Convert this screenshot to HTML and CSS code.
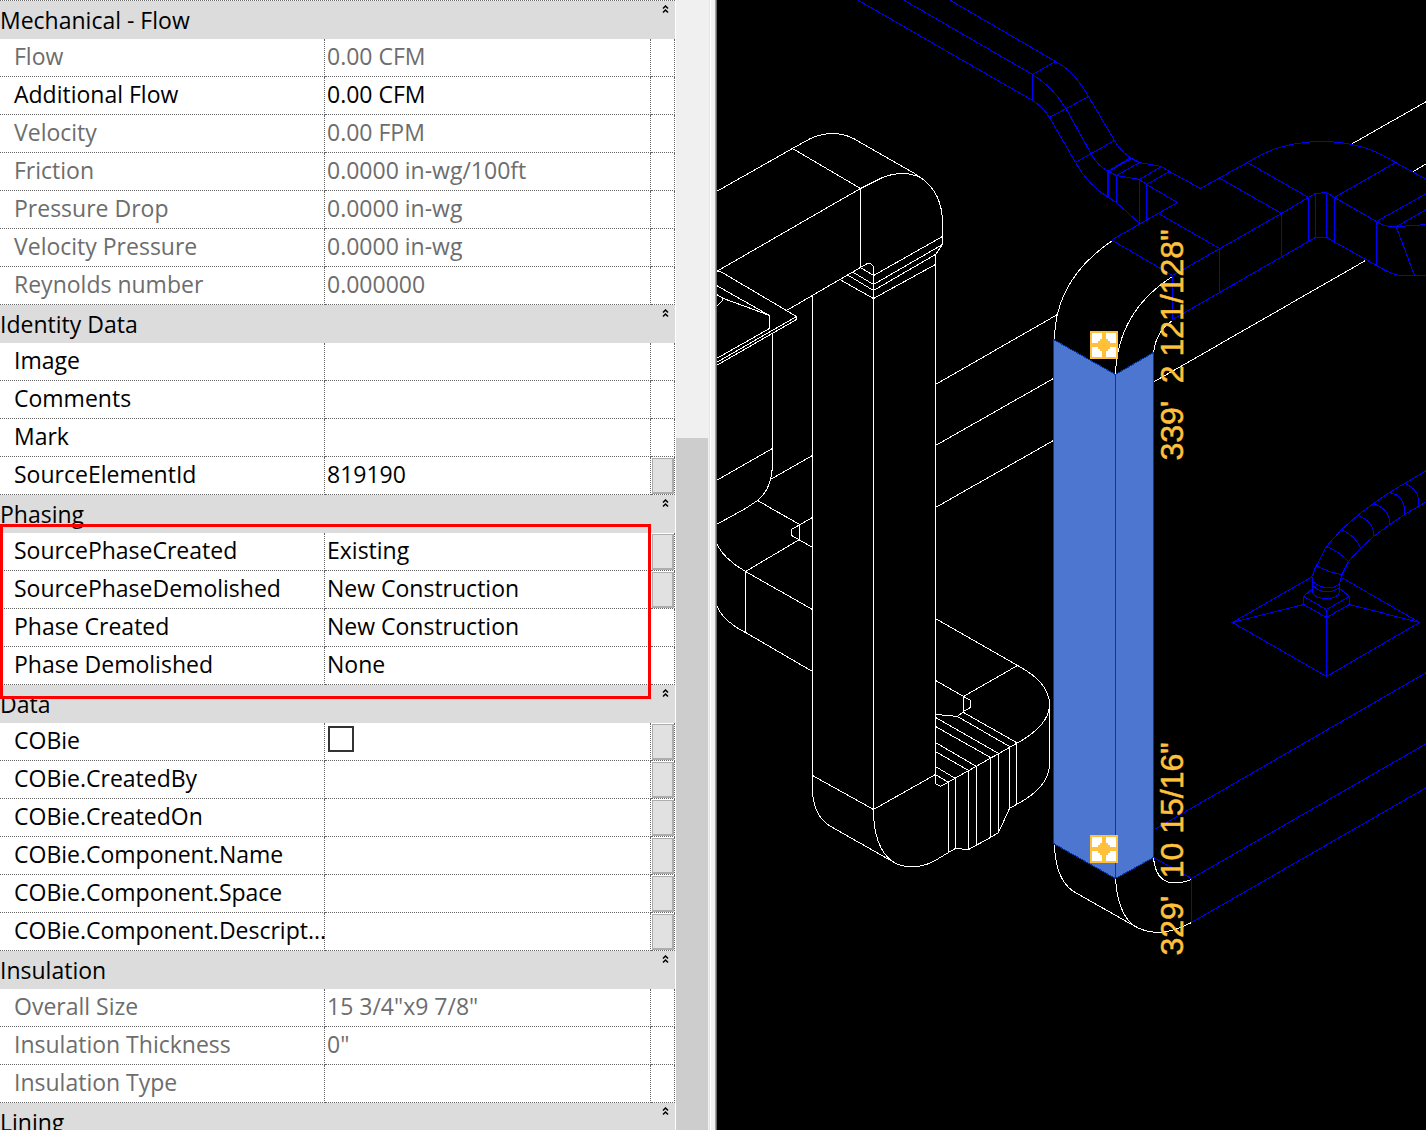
FILE: index.html
```html
<!DOCTYPE html>
<html lang="en">
<head>
<meta charset="utf-8">
<title>Properties</title>
<link rel="stylesheet" href="styles.css">
</head>
<body>
<main class="workspace">
<section class="properties" aria-label="Properties">
<table class="grid">
<colgroup><col class="col-name"><col class="col-value"><col class="col-action"></colgroup>
<tbody>
<tr class="group"><th colspan="2">Mechanical - Flow</th><td><button class="fold" aria-label="Collapse Mechanical - Flow"><svg viewBox="0 0 7 9"><path d="M1 3.500L3.500 1L6 3.500M1 7.500L3.500 5L6 7.500"/></svg></button></td></tr>
<tr class="readonly"><th>Flow</th><td>0.00 CFM</td><td></td></tr>
<tr><th>Additional Flow</th><td>0.00 CFM</td><td></td></tr>
<tr class="readonly"><th>Velocity</th><td>0.00 FPM</td><td></td></tr>
<tr class="readonly"><th>Friction</th><td>0.0000 in-wg/100ft</td><td></td></tr>
<tr class="readonly"><th>Pressure Drop</th><td>0.0000 in-wg</td><td></td></tr>
<tr class="readonly"><th>Velocity Pressure</th><td>0.0000 in-wg</td><td></td></tr>
<tr class="readonly"><th>Reynolds number</th><td>0.000000</td><td></td></tr>
</tbody>
<tbody>
<tr class="group"><th colspan="2">Identity Data</th><td><button class="fold" aria-label="Collapse Identity Data"><svg viewBox="0 0 7 9"><path d="M1 3.500L3.500 1L6 3.500M1 7.500L3.500 5L6 7.500"/></svg></button></td></tr>
<tr><th>Image</th><td></td><td></td></tr>
<tr><th>Comments</th><td></td><td></td></tr>
<tr><th>Mark</th><td></td><td></td></tr>
<tr><th>SourceElementId</th><td>819190</td><td><button class="assoc" aria-label="Associate SourceElementId"></button></td></tr>
</tbody>
<tbody>
<tr class="group"><th colspan="2">Phasing<div class="highlight"></div></th><td><button class="fold" aria-label="Collapse Phasing"><svg viewBox="0 0 7 9"><path d="M1 3.500L3.500 1L6 3.500M1 7.500L3.500 5L6 7.500"/></svg></button></td></tr>
<tr><th>SourcePhaseCreated</th><td>Existing</td><td><button class="assoc" aria-label="Associate SourcePhaseCreated"></button></td></tr>
<tr><th>SourcePhaseDemolished</th><td>New Construction</td><td><button class="assoc" aria-label="Associate SourcePhaseDemolished"></button></td></tr>
<tr><th>Phase Created</th><td>New Construction</td><td></td></tr>
<tr><th>Phase Demolished</th><td>None</td><td></td></tr>
</tbody>
<tbody>
<tr class="group"><th colspan="2">Data</th><td><button class="fold" aria-label="Collapse Data"><svg viewBox="0 0 7 9"><path d="M1 3.500L3.500 1L6 3.500M1 7.500L3.500 5L6 7.500"/></svg></button></td></tr>
<tr><th><label for="cobie">COBie</label></th><td class="check"><input type="checkbox" id="cobie" class="tick"></td><td><button class="assoc" aria-label="Associate COBie"></button></td></tr>
<tr><th>COBie.CreatedBy</th><td></td><td><button class="assoc" aria-label="Associate COBie.CreatedBy"></button></td></tr>
<tr><th>COBie.CreatedOn</th><td></td><td><button class="assoc" aria-label="Associate COBie.CreatedOn"></button></td></tr>
<tr><th>COBie.Component.Name</th><td></td><td><button class="assoc" aria-label="Associate COBie.Component.Name"></button></td></tr>
<tr><th>COBie.Component.Space</th><td></td><td><button class="assoc" aria-label="Associate COBie.Component.Space"></button></td></tr>
<tr><th>COBie.Component.Descript...</th><td></td><td><button class="assoc" aria-label="Associate COBie.Component.Description"></button></td></tr>
</tbody>
<tbody>
<tr class="group"><th colspan="2">Insulation</th><td><button class="fold" aria-label="Collapse Insulation"><svg viewBox="0 0 7 9"><path d="M1 3.500L3.500 1L6 3.500M1 7.500L3.500 5L6 7.500"/></svg></button></td></tr>
<tr class="readonly"><th>Overall Size</th><td>15 3/4"x9 7/8"</td><td></td></tr>
<tr class="readonly"><th>Insulation Thickness</th><td>0"</td><td></td></tr>
<tr class="readonly"><th>Insulation Type</th><td></td><td></td></tr>
</tbody>
<tbody>
<tr class="group"><th colspan="2">Lining</th><td><button class="fold" aria-label="Collapse Lining"><svg viewBox="0 0 7 9"><path d="M1 3.500L3.500 1L6 3.500M1 7.500L3.500 5L6 7.500"/></svg></button></td></tr>
</tbody>
</table>
<div class="scrollbar"><div class="thumb"></div></div>
<div class="splitter"></div>
</section>
<section class="view" aria-label="3D view">
<svg class="drawing" viewBox="716.5 -0.5 709 1130" preserveAspectRatio="xMinYMin slice">
<defs>
<g id="grip">
<rect x="0" y="0" width="28" height="28" fill="#ffc13b"/>
<path fill="#fff" d="M2 2h10v10h-10zM16 2h10v10h-10zM2 16h10v10h-10zM16 16h10v10h-10z"/>
<path fill="#ffc13b" d="M10 8h8v2h2v8h-2v2h-8v-2h-2v-8h2z"/>
</g>
</defs>
<!-- existing ductwork, white -->
<g class="wire white">
<path d="M716 191L792 148L810 138Q821 133 832 133Q843 133 853 138L914 173L920 177M792 148L860 188M716 271L860 188L882 177Q892 173 902 173Q911 173 920 177Q942 192 942 223V244L935 254V783M860 188V267L867 263H870L873 266V809"/>
<path d="M860 267L873 275L942 236M853 272L873 284L942 244M848 275L873 290L935 254M841 280L873 298L935 264M786 310L860 267M812 295V790"/>
<path d="M716 271H720L796 316V319L716 365M796 316L716 362M716 285L769 315V328L716 358M716 294L723 298L753 309L769 315M716 306L721 301L723 298"/>
<path d="M772 333V462Q772 488 757 500L745 508L716 524M772 448L716 480M812 455L770 479M757 500L799 524V539L745 571M812 517L791 529V535L812 547M716 543Q723 558 745 571L812 609M745 571V632M716 605Q723 621 745 632L812 671"/>
<path d="M935 384L1057 314M935 445L1053 378M935 507L1053 440M935 618L1017 665Q1049 682 1049 704Q1049 725 1016 743L940 786L935 783M1049 703V765Q1048 787 1016 804L1009 808L998 832L990 837L968 849L955 848L948 852L933 861Q910 872 892 861Q873 847 873 809"/>
<path d="M812 790Q813 817 832 827L892 861M812 775L873 809L935 774M1017 665L963 696V711L957 716L947 715L935 714M935 680L963 696L970 700V707L963 711"/>
<path d="M963 712L1016 742V804M957 716L1009 746V808M935 717L998 753V832M935 726L990 757V837M935 742L976 766V845M935 751L968 770V849M935 766L955 778V848M935 774L948 782V852"/>
<path d="M1352 143L1426 101M1413 171L1426 163M1365 260L1154 381"/>
<path d="M1112 240Q1054 279 1054 340M1172 276Q1117 311 1115 374M1172 320Q1155 331 1153 353"/>
<path d="M1054 844Q1055 879 1073 891L1133 925Q1158 940 1191 922M1115 878Q1117 912 1133 925M1153 857Q1156 892 1191 879"/>
</g>
<!-- new ductwork, blue -->
<g class="wire blue">
<path d="M858 0L1032 100Q1042 106 1049 117L1075 162Q1088 185 1108 197L1116 202L1139 223"/>
<path d="M904 0L1032 74Q1052 86 1066 109L1091 154Q1097 165 1108 171L1116 175L1139 179L1146 184L1177 202L1112 239"/>
<path d="M950 0L1055 61Q1074 71 1088 96L1114 140Q1122 155 1139 162L1161 166L1169 171L1200 188L1247 162Q1279 141 1321 141Q1363 141 1395 162L1426 179"/>
<path d="M1055 61L1032 74V100M1088 96L1049 117M1114 140L1075 162M1130 157L1107 171V197M1131 158L1108 171V197M1139 162L1116 175V202M1161 166L1139 179V223M1169 171L1146 184V219M1158 213L1219 248V292"/>
<path d="M1220 178L1281 213V256M1247 162L1308 197V241M1395 162L1334 197V241M1112 240L1172 275L1281 213L1308 197L1315 193L1326 192L1334 197L1376 221Q1386 228 1399 226L1426 224"/>
<path d="M1172 275V319L1308 241L1315 237H1326L1376 265Q1392 275 1402 275H1426M1315 193V237M1326 193V237M1376 265V221L1426 193M1396 226L1426 209M1396 227L1414 275"/>
<path d="M1153 857L1191 878L1426 743M1154 829L1426 672M1191 878V922L1426 787"/>
<path d="M1312 576L1232 622L1326 676L1419 622L1341 577M1232 622L1303 604V596L1312 588M1419 622L1349 604V596L1339 588M1303 596L1326 609L1349 596M1303 604L1326 617L1349 604M1326 609V676"/>
<path d="M1312 576V592Q1314 598 1326 598Q1337 598 1339 592V584L1341 575M1312 581Q1326 592 1339 584M1312 585Q1325 597 1339 587"/>
<path d="M1312 576Q1313 570 1316 565L1326 546L1341 529L1357 515L1373 503L1389 492L1404 483L1426 470M1341 575L1348 561L1360 548L1373 536L1388 525L1404 514L1418 506L1426 501"/>
<path d="M1316 565Q1328 572 1341 574M1326 546Q1340 552 1348 561M1341 529Q1357 537 1360 548M1357 515Q1374 521 1373 536M1373 503Q1390 509 1389 524M1389 492Q1405 495 1404 514M1404 483Q1420 489 1418 506"/>
</g>
<!-- selected riser -->
<path class="riser" d="M1053 339L1115 374L1153 352V857L1115 878L1053 843ZM1115 374V878"/>
<use href="#grip" x="1089.500" y="330.500"/>
<use href="#grip" x="1089.500" y="834.500"/>
<text class="elevation" transform="translate(1182 460) rotate(-90)">339'&#160; 2 121/128"</text>
<text class="elevation" transform="translate(1182 955) rotate(-90)">329'&#160; 10 15/16"</text>
</svg>
</section>
</main>
</body>
</html>
```
FILE: styles.css
```css
* { box-sizing: border-box; }

body {
  margin: 0;
  background: #000;
  color: #000;
  font-family: "Open Sans", "Noto Sans", sans-serif;
  font-size: 23px;
}

.workspace {
  display: grid;
  grid-template-columns: 717px minmax(0, 1fr);
  height: 100vh;
  overflow: hidden;
}

.properties {
  display: grid;
  grid-template-columns: minmax(0, 1fr) 32px 9px;
  align-items: start;
  min-height: 0;
  overflow: hidden;
  background: #fff;
}

/* property grid */
.grid {
  width: calc(100% - 1px);
  table-layout: fixed;
  border-spacing: 0;
  border-top: 1px dotted #666;
}
.col-name { width: 325px; }
.col-action { width: 24px; }

.grid th,
.grid td {
  height: 38px;
  padding: 0 0 4px 2px;
  border: 0 dotted #666;
  border-width: 0 1px 1px 0;
  font-weight: 400;
  line-height: 32px;
  text-align: left;
  vertical-align: middle;
  white-space: nowrap;
}
.grid th { padding-left: 14px; }
.grid td:last-child { padding: 1px 0 0 1px; vertical-align: top; line-height: 0; }
.readonly { color: #6d6d6d; }

.grid .group th,
.grid .group td { border-width: 0; background: #dcdcdc; }
.grid .group th { position: relative; padding: 0; }
.grid .group td:last-child { padding: 4px 0 0 11px; }

.fold {
  width: 7px;
  height: 9px;
  padding: 0;
  border: 0;
  background: none;
}
.fold svg { display: block; width: 7px; height: 9px; }
.fold path { fill: none; stroke: #000; stroke-width: 1.5; }

.assoc {
  width: 22px;
  height: 36px;
  padding: 0;
  border: solid #adadad;
  border-width: 1px 2px 2px 1px;
  background: #e1e1e1;
}

.grid .check { padding: 3px 0 0 3px; vertical-align: top; }
.tick {
  display: block;
  appearance: none;
  width: 26px;
  height: 26px;
  margin: 0;
  border: 2px solid #333;
  background: #fff;
}

.highlight {
  position: absolute;
  z-index: 1;
  top: 29px;
  left: 0;
  width: 100%;
  height: 175px;
  border: 3px solid #f00;
  pointer-events: none;
}

.scrollbar {
  display: flex;
  flex-direction: column;
  height: 100vh;
  padding-top: 438px;
  background: #f0f0f0;
}
.thumb { flex: 1; background: #cdcdcd; }

.splitter {
  height: 100vh;
  background: linear-gradient(90deg, #f0f0f0 1px, #e3e3e3 1px 2px, #fff 2px 3px, #f0f0f0 3px 7px, #a0a0a0 7px 8px, #696969 8px);
}

/* 3D view */
.view { min-width: 0; min-height: 0; background: #000; }
.drawing { display: block; width: 100%; height: 100%; }
.wire { fill: none; stroke-width: 1; shape-rendering: crispEdges; }
.white { stroke: #fff; }
.blue { stroke: #00f; }
.riser { fill: #4c76d0; stroke: #0038b0; stroke-width: 1; shape-rendering: crispEdges; }
.elevation {
  fill: #ffc13b;
  stroke: #ffc13b;
  stroke-width: 0.5;
  font-family: "Liberation Sans", Arial, sans-serif;
  font-size: 32px;
}
```
